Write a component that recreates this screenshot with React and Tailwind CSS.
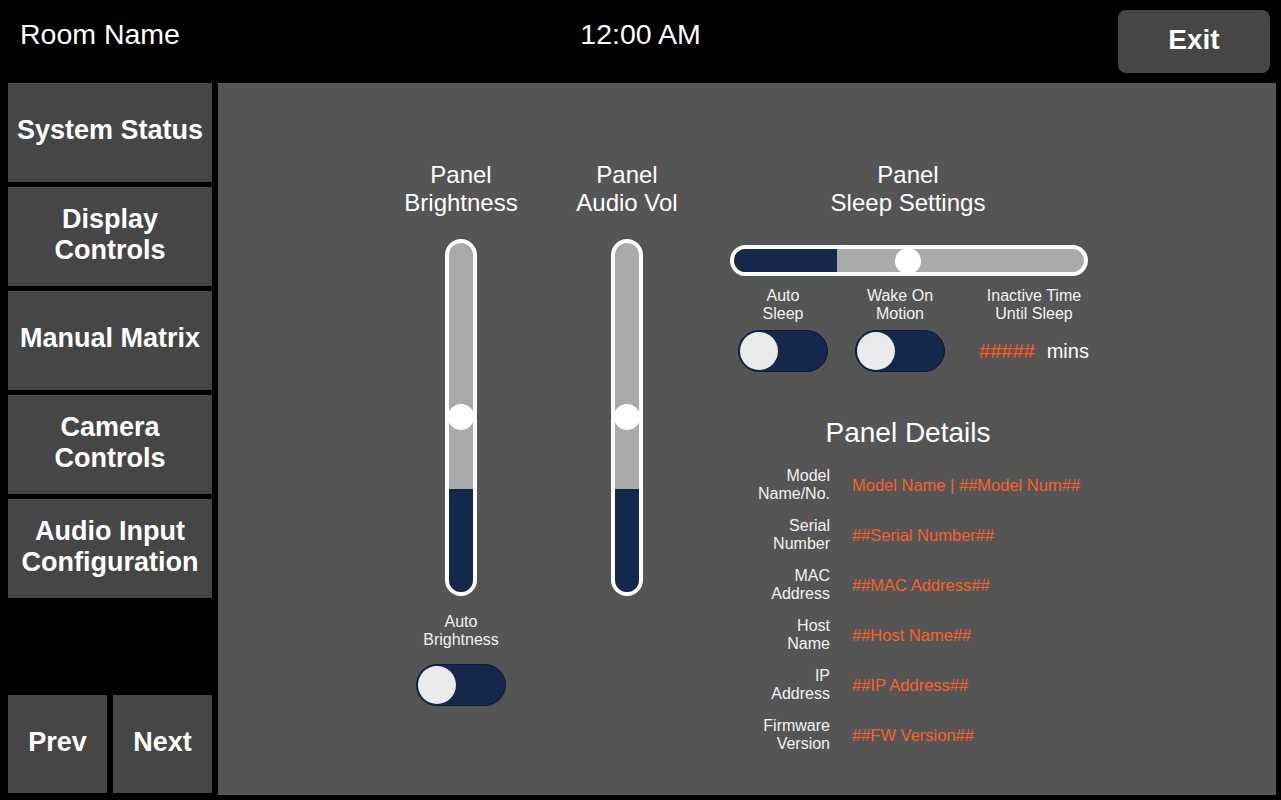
import React from "react";

const NAVY = "bg-[#14284b]";

function Toggle() {
  return (
    <div className={`relative w-[90px] h-[42px] rounded-full ${NAVY} border border-[#0d1c36]`}>
      <div className="absolute left-[1px] top-[1px] w-[38px] h-[38px] rounded-full bg-[#ebebeb]" />
    </div>
  );
}

function VSlider({ knobTop }) {
  return (
    <div className="relative w-[32px] h-[357px]">
      <div className="w-full h-full rounded-full border-4 border-white bg-[#aaaaaa] overflow-hidden flex flex-col justify-end">
        <div className={`h-[103px] ${NAVY}`} />
      </div>
      <div
        className="absolute left-[3px] w-[26px] h-[26px] rounded-full bg-white"
        style={{ top: knobTop }}
      />
    </div>
  );
}

function NavButton({ children }) {
  return (
    <div className="h-[99px] pb-[4px] bg-[#464646] flex items-center justify-center text-center text-white font-bold text-[27px] leading-[31px]">
      {children}
    </div>
  );
}

export default function App() {
  const details = [
    ["Model", "Name/No.", "Model Name | ##Model Num##"],
    ["Serial", "Number", "##Serial Number##"],
    ["MAC", "Address", "##MAC Address##"],
    ["Host", "Name", "##Host Name##"],
    ["IP", "Address", "##IP Address##"],
    ["Firmware", "Version", "##FW Version##"],
  ];

  return (
    <div className="w-[1281px] h-[800px] bg-black overflow-hidden font-['Liberation_Sans',Arial,sans-serif] text-white">
      {/* header */}
      <div className="h-[83px] grid grid-cols-3">
        <div className="pl-[20px] pt-[18px] text-[28.5px] leading-[32px]">Room Name</div>
        <div className="pt-[18px] text-center text-[28.5px] leading-[32px]">12:00 AM</div>
        <div className="flex justify-end pt-[10px] pr-[11px]">
          <div className="w-[152px] h-[63px] pb-[3px] rounded-lg bg-[#464646] flex items-center justify-center font-bold text-[28px]">
            Exit
          </div>
        </div>
      </div>

      <div className="flex h-[712px]">
        {/* sidebar */}
        <div className="w-[212px] pl-[8px] pb-[2px] flex flex-col">
          <div className="flex flex-col gap-[5px]">
            <NavButton>System Status</NavButton>
            <NavButton>Display<br />Controls</NavButton>
            <NavButton>Manual Matrix</NavButton>
            <NavButton>Camera<br />Controls</NavButton>
            <NavButton>Audio Input<br />Configuration</NavButton>
          </div>
          <div className="flex-1" />
          <div className="flex gap-[6px]">
            <div className="w-[99px] h-[98px] pb-[4px] bg-[#464646] flex items-center justify-center font-bold text-[27px]">Prev</div>
            <div className="w-[99px] h-[98px] pb-[4px] bg-[#464646] flex items-center justify-center font-bold text-[27px]">Next</div>
          </div>
        </div>

        {/* main panel */}
        <div className="ml-[6px] w-[1058px] h-full bg-[#555555] flex pl-[183px] pt-[78px]">
          {/* brightness */}
          <div className="w-[120px] shrink-0 flex flex-col items-center">
            <div className="text-center text-[24px] leading-[28px] whitespace-nowrap">Panel<br />Brightness</div>
            <div className="mt-[22px]">
              <VSlider knobTop={165} />
            </div>
            <div className="mt-[17px] text-center text-[16px] leading-[18px] text-[#f2f2f2]">Auto<br />Brightness</div>
            <div className="mt-[15px]">
              <Toggle />
            </div>
          </div>

          {/* audio */}
          <div className="ml-[46px] w-[120px] shrink-0 flex flex-col items-center">
            <div className="text-center text-[24px] leading-[28px] whitespace-nowrap">Panel<br />Audio Vol</div>
            <div className="mt-[22px]">
              <VSlider knobTop={165} />
            </div>
          </div>

          {/* sleep + details */}
          <div className="ml-[41px] w-[360px] shrink-0 flex flex-col">
            <div className="text-center text-[24px] leading-[28px] whitespace-nowrap">Panel<br />Sleep Settings</div>
            <div className="relative ml-[2px] mt-[28px] w-[358px] h-[31px]">
              <div className="w-full h-full rounded-full border-4 border-white bg-[#aaaaaa] overflow-hidden flex">
                <div className={`w-[103px] h-full ${NAVY}`} />
              </div>
              <div className="absolute left-[165px] top-[3px] w-[26px] h-[26px] rounded-full bg-white" />
            </div>

            <div className="flex mt-[11px]">
              <div className="w-[110px] shrink-0 flex flex-col items-center">
                <div className="text-center text-[16px] leading-[18px] text-[#f2f2f2]">Auto<br />Sleep</div>
                <div className="mt-[7px]"><Toggle /></div>
              </div>
              <div className="ml-[6px] w-[112px] shrink-0 flex flex-col items-center">
                <div className="text-center text-[16px] leading-[18px] text-[#f2f2f2]">Wake On<br />Motion</div>
                <div className="mt-[7px]"><Toggle /></div>
              </div>
              <div className="ml-[8px] w-[140px] shrink-0 flex flex-col items-center">
                <div className="text-center text-[16px] leading-[18px] text-[#f2f2f2] whitespace-nowrap">Inactive Time<br />Until Sleep</div>
                <div className="mt-[7px] h-[42px] flex items-center gap-3 text-[20px]">
                  <span className="text-[#ff5a1a]">#####</span>
                  <span>mins</span>
                </div>
              </div>
            </div>

            <div className="mt-[45px] text-center text-[28px] leading-[32px]">Panel Details</div>

            <div className="mt-[18px] flex flex-col gap-[14px]">
              {details.map(([a, b, v], i) => (
                <div key={i} className="flex items-center h-[36px]">
                  <div className="w-[102px] shrink-0 text-right text-[16px] leading-[18px] text-[#f2f2f2]">
                    {a}<br />{b}
                  </div>
                  <div className="ml-[22px] text-[16.5px] text-[#f8622a] whitespace-nowrap">{v}</div>
                </div>
              ))}
            </div>
          </div>
        </div>
      </div>
    </div>
  );
}
